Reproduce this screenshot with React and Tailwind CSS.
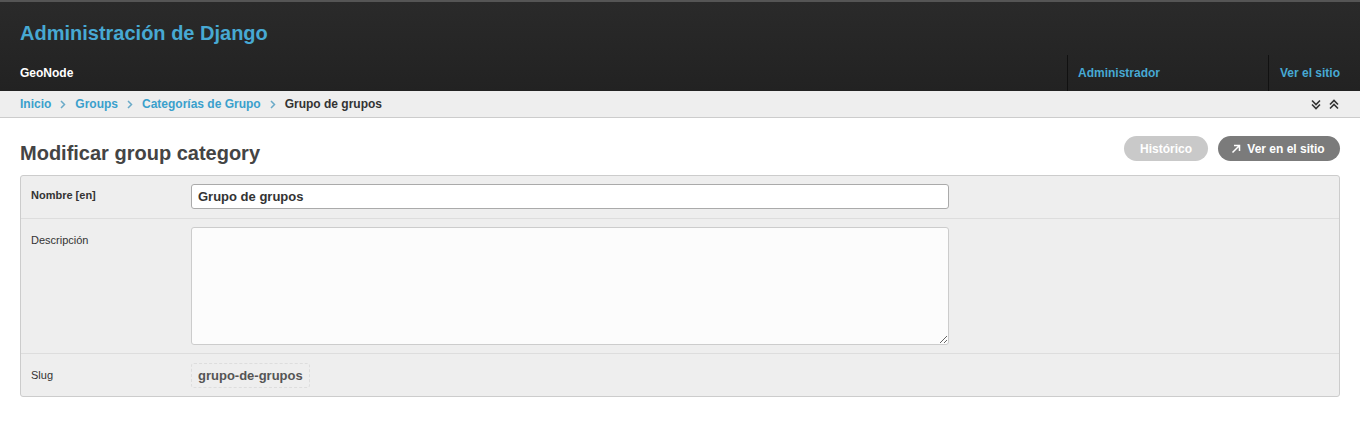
import React from 'react';

const FONT = { fontFamily: '"Liberation Sans", Arial, sans-serif' };

const Chevron = () => (
  <svg width="10" height="11" viewBox="0 0 10 11" className="text-[#333]">
    <path d="M1 1.5l4 4 4-4M1 5.5l4 4 4-4" fill="none" stroke="currentColor" strokeWidth="1.6" />
  </svg>
);

const Sep = () => (
  <svg width="6" height="9" viewBox="0 0 6 9" className="text-[#6aaac8]">
    <path d="M1 1l3.5 3.5L1 8" fill="none" stroke="currentColor" strokeWidth="1.5" />
  </svg>
);

const FormRow = ({ label, bold, children, className = '', labelClass = '' }) => (
  <div className={`flex px-[10px] border-b border-[#ddd] last:border-b-0 ${className}`}>
    <div className={`w-[160px] shrink-0 text-[11px] text-[#333] ${bold ? 'font-bold' : ''} ${labelClass}`}>
      {label}
    </div>
    <div className="flex-1">{children}</div>
  </div>
);

export default function App() {
  return (
    <div className="min-h-[422px] bg-white" style={FONT}>
      {/* Header */}
      <div className="border-t-2 border-[#555] bg-gradient-to-b from-[#2a2a2a] to-[#222]">
        <div className="h-[53px] flex items-end px-5 pb-[12px]">
          <h1 className="text-[20px] font-bold text-[#47a9d3] leading-none">Administración de Django</h1>
        </div>
        <div className="flex h-[36px] items-center">
          <div className="flex-1 px-5 text-[12px] font-bold text-white">GeoNode</div>
          <div className="w-[201px] h-full border-l border-[#111] flex items-center px-[10px] text-[12px] font-bold text-[#47a9d3]">
            Administrador
          </div>
          <div className="w-[92px] h-full border-l border-[#111] flex items-center px-[11px] text-[12px] font-bold text-[#47a9d3]">
            Ver el sitio
          </div>
        </div>
      </div>

      {/* Breadcrumbs */}
      <div className="h-[27px] bg-[#eee] border-b border-[#ccc] flex items-center px-5 text-[12px] font-bold">
        <div className="flex-1 flex items-center gap-[9px]">
          <span className="text-[#3aa0cc]">Inicio</span>
          <Sep />
          <span className="text-[#3aa0cc]">Groups</span>
          <Sep />
          <span className="text-[#3aa0cc]">Categorías de Grupo</span>
          <Sep />
          <span className="text-[#333]">Grupo de grupos</span>
        </div>
        <div className="flex items-center gap-[8px] mr-[1px]">
          <Chevron />
          <span className="rotate-180 flex"><Chevron /></span>
        </div>
      </div>

      {/* Content */}
      <div className="px-5 pt-[18px]">
        <div className="flex items-end justify-between">
          <h2 className="text-[20px] font-bold text-[#444] leading-none mb-[2px]">Modificar group category</h2>
          <div className="flex gap-[10px] mb-[4px]">
            <span className="h-[25px] w-[84px] rounded-full bg-[#c9c9c9] text-white text-[12px] font-bold flex items-center justify-center">
              Histórico
            </span>
            <span className="h-[25px] w-[122px] rounded-full bg-[#7b7b7b] text-white text-[12px] font-bold flex items-center justify-center gap-[6px] pr-[2px]">
              <svg width="10" height="10" viewBox="0 0 10 10">
                <path d="M1.5 8.5L8.5 1.5M3 1.5h5.5V7" fill="none" stroke="white" strokeWidth="1.5" />
              </svg>
              Ver en el sitio
            </span>
          </div>
        </div>

        <div className="mt-[10px] border border-[#ccc] rounded-[3px] bg-[#eee]">
          <FormRow label="Nombre [en]" bold className="pt-[8px] pb-[9px] items-center" labelClass="pb-[2px]">
            <input
              readOnly
              value="Grupo de grupos"
              className="w-[758px] h-[25px] border border-[#aaa] rounded-[3px] bg-white px-[6px] text-[13px] font-bold text-[#333] outline-none"
              style={FONT}
            />
          </FormRow>
          <FormRow label="Descripción" className="pt-[8px] pb-[8px]" labelClass="pt-[5px]">
            <textarea
              readOnly
              className="block w-[758px] h-[118px] border border-[#ccc] rounded-[3px] bg-[#fcfcfc] outline-none"
            />
          </FormRow>
          <FormRow label="Slug" className="pt-[9px] pb-[8px] items-center">
            <div className="inline-block border border-dashed border-[#ddd] rounded-[3px] px-[6px] h-[25px] leading-[23px] text-[13px] font-bold text-[#555]">
              grupo-de-grupos
            </div>
          </FormRow>
        </div>
      </div>
    </div>
  );
}
